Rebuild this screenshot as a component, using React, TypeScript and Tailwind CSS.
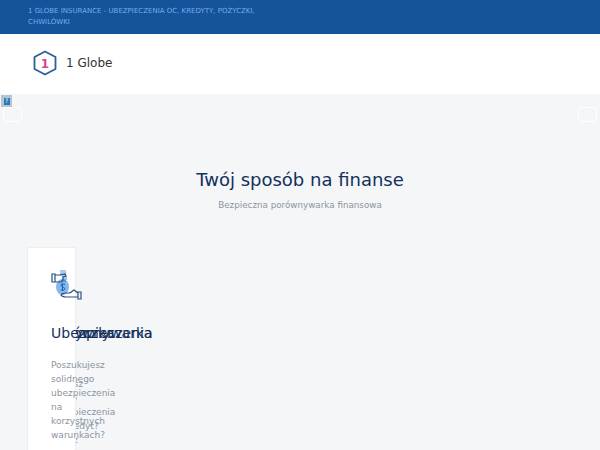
import React from "react";

const backTitles = ["Pożyczka", "Porównywarka"];
const backLines = ["Myślisz", "drogo", "ubezpieczenia", "na kredyt?", "albo z"];

function MoneyIcon() {
  return (
    <svg width="31" height="33" viewBox="0 0 31 33" fill="none">
      <path d="M9 1h6v6H9z" fill="#a8ccf0" />
      <ellipse cx="11.5" cy="18" rx="6.5" ry="8" fill="#86b8ee" />
      <path d="M11.5 14v8M14 15.5c-2-1-4.500-.5-4 1.300s4 1 3.700 3-2.700 1.700-4 1" stroke="#1f63b5" strokeWidth="1" />
      <path d="M1 5h3v8H1zM4 6h5l5-1 1 2-3 1v3l-2 2H4" stroke="#2a4f7e" strokeWidth="1.200" />
      <path d="M11 8h5M11 10h5M11 12h4" stroke="#1f63b5" strokeWidth="0.800" />
      <path d="M30 23v7h-3v-7zM27 24l-4-3c-2 1-3 3-5 3h-3c-2 0-5 1-5 2s3 2 5 2h12" stroke="#2a4f7e" strokeWidth="1.200" />
    </svg>
  );
}

export default function App() {
  return (
    <div className="flex h-[450px] w-[600px] flex-col overflow-hidden bg-[#f4f6f8] font-['DejaVu_Sans',sans-serif]">
      <div className="h-[34px] shrink-0 bg-[#15539b] px-7 pt-[6px] text-[7px] leading-[11px] text-[#75acec]">
        <p className="w-[240px]">1 GLOBE INSURANCE - UBEZPIECZENIA OC, KREDYTY, POŻYCZKI, CHWILÓWKI</p>
      </div>

      <header className="flex h-[60px] shrink-0 items-center gap-[9px] bg-white pb-[2px] pl-[33px]">
        <svg width="24" height="26" viewBox="0 0 24 26" fill="none">
          <path d="M12 1.500 22.500 7v12L12 24.500 1.500 19V7z" stroke="#2a5f98" strokeWidth="1.800" strokeLinejoin="round" />
          <text x="12" y="18" textAnchor="middle" fontSize="12" fontWeight="700" fill="#e0408c" fontFamily="DejaVu Sans">1</text>
        </svg>
        <span className="text-[12px] text-[#333333]">1 Globe</span>
      </header>

      <main className="flex flex-col pt-[1px]">
        <div className="flex items-end justify-between pl-[1px] pr-[3px]">
          <div className="flex flex-col items-start">
            <span className="flex h-[12px] w-[11px] items-center justify-center bg-[#b4c6d6]">
              <span className="flex h-[7px] w-[6px] items-center justify-center bg-[#2a7ab5] text-[6px] leading-none text-white">?</span>
            </span>
            <span className="ml-[2px] h-[15px] w-[19px] rounded-[3px] border border-white" />
          </div>
          <span className="h-[15px] w-[19px] rounded-[3px] border border-white" />
        </div>

        <div className="flex flex-col items-center pt-[45px]">
          <h1 className="text-[18px] leading-[26px] text-[#15305c]">Twój sposób na finanse</h1>
          <p className="mt-[5px] text-[8.750px] leading-[14px] text-[#8b95a1]">Bezpieczna porównywarka finansowa</p>
        </div>

        <div className="ml-[27px] mt-[35px] grid h-[210px] w-[49px] grid-cols-[49px]">
          {backTitles.map((t) => (
            <h2 key={t} className="col-start-1 row-start-1 whitespace-nowrap pl-[24px] pt-[77px] text-[14px] leading-[18px] text-[#15305c]">{t}</h2>
          ))}
          <div className="col-start-1 row-start-1 whitespace-nowrap pl-[24px] pt-[130px] text-[9px] leading-[14px] text-[#8b95a1]">
            {backLines.map((l) => (
              <p key={l}>{l}</p>
            ))}
          </div>
          <div className="relative col-start-1 row-start-1 border border-[#eceef1] bg-white pl-[23px] pt-[21px]">
            <MoneyIcon />
            <h2 className="mt-[22px] w-[110px] text-[14px] leading-[18px] text-[#15305c]">Ubezpieczenia</h2>
            <p className="mt-[16px] w-[64px] text-[9px] leading-[14px] text-[#8b95a1]">Poszukujesz solidnego ubezpieczenia na korzystnych warunkach?</p>
          </div>
        </div>
      </main>
    </div>
  );
}
